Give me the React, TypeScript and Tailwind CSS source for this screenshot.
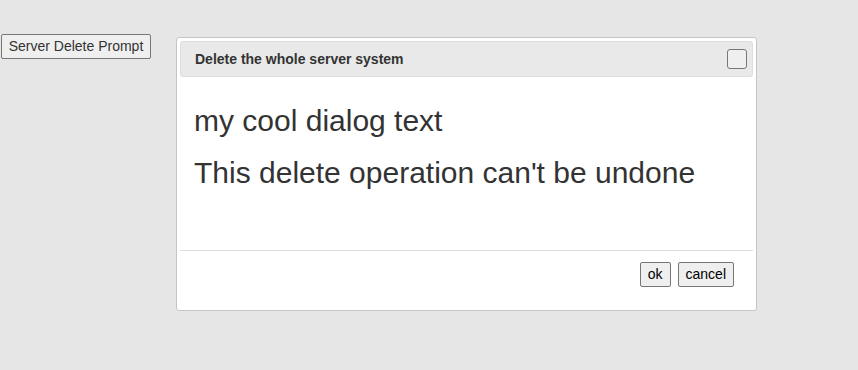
import React from "react";

export default function App() {
  return (
    <div className="relative h-[370px] w-[858px] bg-[#e6e6e6] font-['Liberation_Sans',Arial,sans-serif]">
      <div className="pt-[34px] pl-[1px]">
        <button className="h-[25px] w-[150px] rounded-[2px] border border-[#767676] bg-[#efefef] text-[14px] text-[#333]">
          Server Delete Prompt
        </button>
      </div>

      <div className="absolute left-[176px] top-[37px] flex h-[274px] w-[581px] flex-col rounded-[3px] border border-[#c5c5c5] bg-white p-[3px]">
        <div className="flex h-[36px] items-center justify-between rounded-[3px] border border-[#dddddd] bg-[#e9e9e9] pl-[14px] pr-[5px]">
          <span className="text-[14px] font-bold text-[#333]">Delete the whole server system</span>
          <span className="h-[20px] w-[20px] rounded-[3px] border border-[#777] bg-[#efefef]" />
        </div>
        <div className="flex-1 px-[14px] pt-[18px] text-[30px] text-[#333]">
          <p className="leading-[52px]">my cool dialog text</p>
          <p className="leading-[52px]">This delete operation can't be undone</p>
        </div>
        <div className="flex h-[57px] justify-end gap-[7px] border-t border-[#dddddd] pr-[19px] pt-[11px]">
          <button className="h-[25px] rounded-[2px] border border-[#767676] bg-[#efefef] px-[7px] text-[14px] text-black">
            ok
          </button>
          <button className="h-[25px] rounded-[2px] border border-[#767676] bg-[#efefef] px-[7px] text-[14px] text-black">
            cancel
          </button>
        </div>
      </div>
    </div>
  );
}
